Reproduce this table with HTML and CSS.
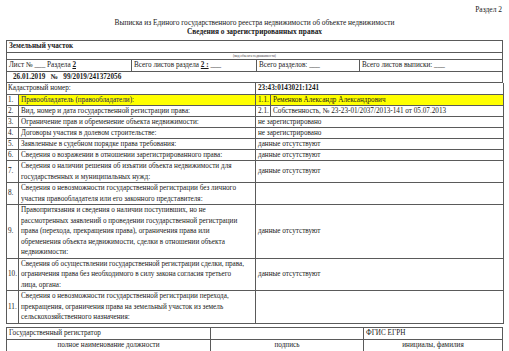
FILE: index.html
```html
<!DOCTYPE html>
<html lang="ru">
<head>
<meta charset="utf-8">
<link rel="stylesheet" href="styles.css">
</head>
<body>
<div class="page">
  <div class="razdel">Раздел 2</div>
  <div class="title">Выписка из Единого государственного реестра недвижимости об объекте недвижимости</div>
  <div class="title bold">Сведения о зарегистрированных правах</div>

  <table class="blk first">
    <tr><td class="obj">Земельный участок</td></tr>
    <tr><td class="vid">(вид объекта недвижимости)</td></tr>
  </table>
  <table class="blk list">
    <tr>
      <td class="c1">Лист № ___ Раздела <span class="u">2</span></td>
      <td class="c2">Всего листов раздела <span class="u">2 :</span> ___</td>
      <td class="c3">Всего разделов: ___</td>
      <td class="c4">Всего листов выписки: ___</td>
    </tr>
  </table>
  <table class="blk">
    <tr><td class="date">26.01.2019 &nbsp;&nbsp;№ &nbsp;&nbsp;99/2019/241372056</td></tr>
  </table>
  <table class="blk main">
    <colgroup>
      <col class="w-num"><col class="w-label"><col class="w-sub"><col class="w-val">
    </colgroup>
    <tr class="r1 kad">
      <td colspan="2">Кадастровый номер:</td>
      <td colspan="2" class="bold">23:43:0143021:1241</td>
    </tr>
    <tr class="r1">
      <td>1.</td>
      <td class="hl link">Правообладатель (правообладатели):</td>
      <td class="hl">1.1.</td>
      <td class="hl">Ременков Александр Александрович</td>
    </tr>
    <tr class="r1">
      <td>2.</td>
      <td>Вид, номер и дата государственной регистрации права:</td>
      <td>2.1.</td>
      <td>Собственность, № 23-23-01/2037/2013-141 от 05.07.2013</td>
    </tr>
    <tr class="r1">
      <td>3.</td>
      <td>Ограничение прав и обременение объекта недвижимости:</td>
      <td colspan="2">не зарегистрировано</td>
    </tr>
    <tr class="r1">
      <td>4.</td>
      <td>Договоры участия в долевом строительстве:</td>
      <td colspan="2">не зарегистрировано</td>
    </tr>
    <tr class="r1">
      <td>5.</td>
      <td>Заявленные в судебном порядке права требования:</td>
      <td colspan="2">данные отсутствуют</td>
    </tr>
    <tr class="r1">
      <td>6.</td>
      <td>Сведения о возражении в отношении зарегистрированного права:</td>
      <td colspan="2">данные отсутствуют</td>
    </tr>
    <tr>
      <td>7.</td>
      <td class="ml">Сведения о наличии решения об изъятии объекта недвижимости для<br>государственных и муниципальных нужд:</td>
      <td colspan="2">данные отсутствуют</td>
    </tr>
    <tr>
      <td>8.</td>
      <td class="ml">Сведения о невозможности государственной регистрации без личного<br>участия правообладателя или его законного представителя:</td>
      <td colspan="2"></td>
    </tr>
    <tr>
      <td>9.</td>
      <td class="ml">Правопритязания и сведения о наличии поступивших, но не<br>рассмотренных заявлений о проведении государственной регистрации<br>права (перехода, прекращения права), ограничения права или<br>обременения объекта недвижимости, сделки в отношении объекта<br>недвижимости:</td>
      <td colspan="2">данные отсутствуют</td>
    </tr>
    <tr>
      <td>10.</td>
      <td class="ml tight">Сведения об осуществлении государственной регистрации сделки, права,<br>ограничения права без необходимого в силу закона согласия третьего<br>лица, органа:</td>
      <td colspan="2">данные отсутствуют</td>
    </tr>
    <tr>
      <td>11.</td>
      <td class="ml">Сведения о невозможности государственной регистрации перехода,<br>прекращения, ограничения права на земельный участок из земель<br>сельскохозяйственного назначения:</td>
      <td colspan="2"></td>
    </tr>
  </table>

  <table class="foot">
    <tr>
      <td class="f1">Государственный регистратор</td>
      <td class="f2"></td>
      <td class="f3">ФГИС ЕГРН</td>
    </tr>
    <tr>
      <td class="f1 center">полное наименование должности</td>
      <td class="f2 center">подпись</td>
      <td class="f3 center">инициалы, фамилия</td>
    </tr>
  </table>
  <div class="mp">М.П.</div>
</div>
</body>
</html>
```

FILE: styles.css
```css
html, body {
  margin: 0;
  padding: 0;
  background: #ffffff;
}
body {
  font-family: "Liberation Serif", "Times New Roman", serif;
  font-size: 7.2px;
  color: #1a1a1a;
  overflow: hidden;
}
.page {
  width: 497px;
  padding: 4px 6px 0 6px;
}
.razdel {
  text-align: right;
  padding-right: 1px;
  font-size: 7.5px;
  line-height: 10px;
  margin-top: 1px;
}
.title {
  text-align: center;
  font-size: 7.4px;
  line-height: 9px;
}
.razdel + .title { margin-top: 3px; }
.bold { font-weight: bold; }

table {
  border-collapse: collapse;
  width: 497px;
  table-layout: fixed;
}
td {
  border: 1px solid #5a5a5a;
  padding: 0 2px;
  line-height: 10.5px;
  vertical-align: middle;
}
.blk.first { margin-top: 4px; }
.blk + .blk td { border-top: 0; }

.obj {
  font-weight: bold;
  height: 11px;
  line-height: 11px;
  padding-left: 2px;
}
.vid {
  font-size: 3.5px;
  line-height: 6px;
  height: 6px;
  text-align: center;
  color: #444;
}
.list td { height: 11px; line-height: 11px; }
.list .c1 { width: 120px; }
.list .c2 { width: 120px; }
.list .c3 { width: 98px; }
.u {
  text-decoration: underline;
  font-weight: bold;
}
.date {
  font-weight: bold;
  height: 10px;
  line-height: 10px;
  padding-left: 6px;
}

.w-num { width: 12px; }
.w-label { width: 237px; }
.w-sub { width: 15px; }
.w-val { width: 233px; }
.main td { padding: 0 1px 0 2px; }
.main td:first-child { padding: 0 0 0 1px; }
.r1 td { height: 10px; line-height: 10px; }
.kad td { height: 11px; line-height: 11px; }
.ml { white-space: nowrap; }
.tight { letter-spacing: -0.04px; }
.hl { background: #ffff00; }
.link { color: #20205a; }

.foot { margin-top: 3px; }
.foot td { height: 11px; line-height: 11px; }
.foot .f1 { width: 199px; }
.foot .f2 { width: 148px; }
.center { text-align: center; }
.mp {
  text-align: center;
  line-height: 9px;
  margin-top: 1px;
}
```
